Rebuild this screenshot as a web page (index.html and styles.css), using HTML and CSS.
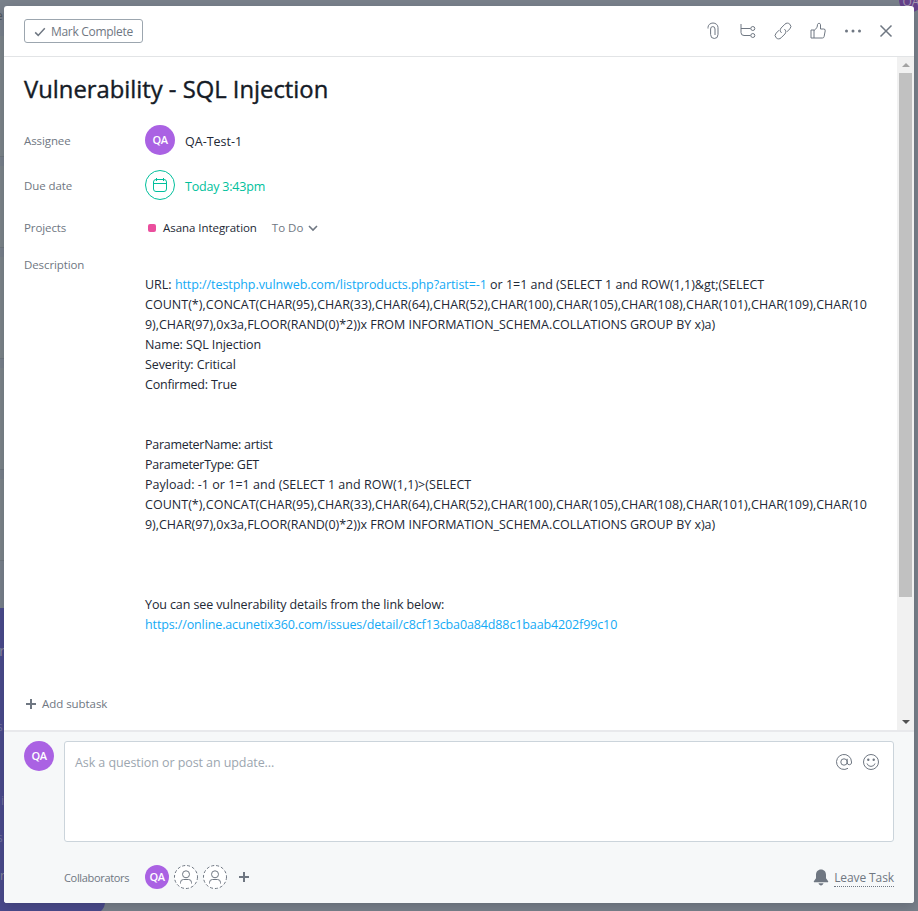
FILE: index.html
```
<!DOCTYPE html>
<html lang="en">
<head>
  <meta charset="UTF-8" />
  <title>Vulnerability - SQL Injection</title>
  <link rel="stylesheet" href="styles.css">
</head>
<body>
  <div class="backdrop">
    <div class="row-strip r1"></div>
    <div class="row-strip r2"></div>
    <div class="row-strip r3"></div>
    <div class="row-strip r4"></div>
    <div class="row-strip r5"></div>
    <div class="promo"></div>
    <span class="behind b1">e</span>
    <span class="behind b2">r</span>
    <span class="behind b3">s</span>
    <span class="behind b4">i</span>
    <span class="behind b5">s</span>
    <span class="behind b6">r</span>
    <div class="back-avatar">QA</div>
  </div>

  <div class="modal">
    <div class="toolbar">
      <button class="complete-btn">
        <svg width="12" height="12" viewBox="0 0 12 12"><path d="M1.2 6.4l3 3L10.800 2.300" /></svg>
        <span>Mark Complete</span>
      </button>
      <div class="tools">
        <svg class="tool" width="18" height="18" viewBox="0 0 18 18"><path d="M4 6.500V5.500a5 4.500 0 0 1 10 0v7a3.700 4 0 0 1-7.400 0V7a2 2.200 0 0 1 4.400 0v6" /></svg>
        <svg class="tool" width="18" height="18" viewBox="0 0 18 18"><path d="M2 2v8.500a3 3 0 0 0 3 3h6.500M2 6.500h9.500" /><circle cx="13.800" cy="6.500" r="2" /><circle cx="13.800" cy="13.500" r="2" /></svg>
        <svg class="tool" width="18" height="18" viewBox="0 0 18 18"><path d="M7.600 10.900a3.300 3.300 0 0 1-.5-4.900l3.800-3.800a3.300 3.300 0 0 1 4.900 0 3.300 3.300 0 0 1 0 4.700l-3 3" /><path d="M10.400 7.100a3.300 3.300 0 0 1 .5 4.900l-3.800 3.800a3.300 3.300 0 0 1-4.900 0 3.300 3.300 0 0 1 0-4.700l3-3" /></svg>
        <svg class="tool" width="18" height="18" viewBox="0 0 18 18"><path d="M2 8h3v8H2zM5 8.500L8 5.600l.6-3.300a1.500 1.500 0 0 1 2.900.4V7h3.100a1.600 1.600 0 0 1 1.600 1.900l-1.100 5.700a1.700 1.700 0 0 1-1.700 1.400H5" /></svg>
        <svg class="tool dots" width="18" height="18" viewBox="0 0 18 18"><circle cx="2.500" cy="9" r="1.500" /><circle cx="9" cy="9" r="1.500" /><circle cx="15.500" cy="9" r="1.500" /></svg>
        <svg class="tool close" width="18" height="18" viewBox="0 0 18 18"><path d="M3.500 3.500l11 11M14.500 3.500l-11 11" /></svg>
      </div>
    </div>

    <div class="content">
      <div class="task">
        <h1>Vulnerability - SQL Injection</h1>

        <div class="field assignee">
          <span class="label">Assignee</span>
          <span class="avatar">QA</span>
          <span class="value">QA-Test-1</span>
        </div>
        <div class="field due">
          <span class="label">Due date</span>
          <span class="date-icon">
            <svg width="16" height="16" viewBox="0 0 16 16"><rect x="1.500" y="2.500" width="13" height="12" rx="2.500" /><path d="M1.500 6.500h13M4.500 1v3M11.500 1v3" /></svg>
          </span>
          <span class="value date">Today 3:43pm</span>
        </div>
        <div class="field projects">
          <span class="label">Projects</span>
          <span class="dot"></span>
          <span class="project-name">Asana Integration</span>
          <span class="section">To Do</span>
          <svg class="chevron" width="10" height="7" viewBox="0 0 10 7"><path d="M1 1l4 4 4-4" /></svg>
        </div>
        <div class="field description">
          <span class="label">Description</span>
          <div class="text">
            <p>URL: <a class="target" href="#">http://testphp.vulnweb.com/listproducts.php?artist=-1</a> or 1=1 and (SELECT 1 and ROW(1,1)&amp;gt;(SELECT</p>
            <p class="chars">COUNT(*),CONCAT(CHAR(95),CHAR(33),CHAR(64),CHAR(52),CHAR(100),CHAR(105),CHAR(108),CHAR(101),CHAR(109),CHAR(10</p>
            <p class="query">9),CHAR(97),0x3a,FLOOR(RAND(0)*2))x FROM INFORMATION_SCHEMA.COLLATIONS GROUP BY x)a)</p>
            <p class="meta">Name: SQL Injection</p>
            <p class="meta">Severity: Critical</p>
            <p class="meta confirmed">Confirmed: True</p>
            <br><br>
            <p class="param">ParameterName: artist</p>
            <p class="param">ParameterType: GET</p>
            <p class="payload">Payload: -1 or 1=1 and (SELECT 1 and ROW(1,1)&gt;(SELECT</p>
            <p class="chars">COUNT(*),CONCAT(CHAR(95),CHAR(33),CHAR(64),CHAR(52),CHAR(100),CHAR(105),CHAR(108),CHAR(101),CHAR(109),CHAR(10</p>
            <p class="query">9),CHAR(97),0x3a,FLOOR(RAND(0)*2))x FROM INFORMATION_SCHEMA.COLLATIONS GROUP BY x)a)</p>
            <br><br><br>
            <p class="details">You can see vulnerability details from the link below:</p>
            <p><a class="issue" href="#">https://online.acunetix360.com/issues/detail/c8cf13cba0a84d88c1baab4202f99c10</a></p>
          </div>
        </div>

        <div class="add-subtask">
          <svg class="plus" width="12" height="12" viewBox="0 0 12 12"><path d="M6 1v10M1 6h10" /></svg>
          <span>Add subtask</span>
        </div>
      </div>
      <div class="scrollbar">
        <span class="arrow up"></span>
        <span class="thumb"></span>
        <span class="arrow down"></span>
      </div>
    </div>

    <div class="footer">
      <div class="composer">
        <span class="avatar">QA</span>
        <div class="comment-box">
          <span class="placeholder">Ask a question or post an update...</span>
          <svg class="tool" width="18" height="18" viewBox="0 0 18 18"><circle cx="9" cy="9" r="3.200" /><path d="M12.200 5.800V10a2.200 2.200 0 0 0 4.300 0V9A7.500 7.500 0 1 0 13 15.300" /></svg>
          <svg class="tool" width="18" height="18" viewBox="0 0 18 18"><circle cx="9" cy="9" r="7.500" /><path d="M5 10.500a4.200 4.200 0 0 0 8 0" /><circle class="eye" cx="6.300" cy="6.700" r="1.200" /><circle class="eye" cx="11.700" cy="6.700" r="1.200" /></svg>
        </div>
      </div>
      <div class="collaborators">
        <span class="collab-label">Collaborators</span>
        <span class="avatar small">QA</span>
        <svg class="ghost" width="24" height="24" viewBox="0 0 24 24"><circle class="ring" cx="12" cy="12" r="11.500" /><circle cx="12" cy="9.300" r="3.500" /><path d="M6.500 18.500v-1a3 3 0 0 1 3-3h5a3 3 0 0 1 3 3v1" /></svg>
        <svg class="ghost" width="24" height="24" viewBox="0 0 24 24"><circle class="ring" cx="12" cy="12" r="11.500" /><circle cx="12" cy="9.300" r="3.500" /><path d="M6.500 18.500v-1a3 3 0 0 1 3-3h5a3 3 0 0 1 3 3v1" /></svg>
        <svg class="plus" width="12" height="12" viewBox="0 0 12 12"><path d="M6 1v10M1 6h10" /></svg>
        <svg class="bell" width="16" height="17" viewBox="0 0 16 17"><path d="M8 .5c3.200 0 5 2.300 5 5.200v3.500l2 2.700c.5.700.2 1.300-.6 1.300H1.600C.8 13.200.5 12.600 1 11.900l2-2.700V5.700C3 2.800 4.800.5 8 .5zM5.500 14.300h5c-.5 1.400-1.300 2.100-2.500 2.100s-2-.7-2.500-2.100z" /></svg>
        <span class="leave">Leave Task</span>
      </div>
    </div>
  </div>
</body>
</html>
```
FILE: styles.css
```
* {
  box-sizing: border-box;
}

body {
  margin: 0;
  height: 911px;
  padding: 6px 4px 8px;
  overflow: hidden;
  background: #79818b;
  font-family: 'Segoe UI', 'Open Sans', sans-serif;
  font-size: 12.5px;
  line-height: 20px;
  color: #222835;
}

h1, p {
  margin: 0;
}

svg {
  flex: none;
  fill: none;
  stroke: #6f7782;
}

a {
  color: #14aaf5;
  text-decoration: none;
}

.backdrop {
  position: absolute;
  inset: 0;
  overflow: hidden;
  background: #79818b;
}

.row-strip {
  position: absolute;
  left: 0;
  width: 8px;
  background: #7d858a;
  border-bottom: 1px solid #70787f;
}

.r1 { top: 36px; height: 121px; }
.r2 { top: 166px; height: 82px; }
.r3 { top: 257px; height: 102px; }
.r4 { top: 368px; height: 102px; }
.r5 { top: 479px; height: 82px; }

.promo {
  position: absolute;
  left: 0;
  top: 608px;
  width: 105px;
  height: 306px;
  background: #4a4a8c;
  border-radius: 0 0 12px 0;
}

.behind {
  position: absolute;
  left: -3px;
  font-size: 12px;
  color: #73749f;
}

.b1 { top: 6px; left: -4px; color: #4f565f; }
.b2 { top: 640px; left: -1px; font-size: 15px; color: #8a8b9f; }
.b3 { top: 717px; }
.b4 { top: 791px; left: 1px; }
.b5 { top: 828px; }
.b6 { top: 866px; left: 0; color: #8a8b9f; }

.back-avatar {
  position: absolute;
  left: 899px;
  top: -12px;
  width: 24px;
  height: 24px;
  border-radius: 50%;
  background: #66418b;
  color: #a59ab2;
  font-size: 12px;
  line-height: 27px;
  text-align: center;
}

.modal {
  position: relative;
  display: flex;
  flex-direction: column;
  height: 897px;
  border-radius: 3px;
  background: #fff;
  overflow: hidden;
  box-shadow: 0 4px 12px rgba(21, 27, 38, 0.2);
}

.toolbar {
  display: flex;
  align-items: center;
  justify-content: space-between;
  flex: none;
  height: 51px;
  padding: 0 19px 0 20px;
  border-bottom: 1px solid #e2e4e6;
}

.complete-btn {
  display: flex;
  align-items: center;
  gap: 5px;
  width: 119px;
  height: 24px;
  padding: 2px 9px 0;
  border: 1px solid #9ca6af;
  border-radius: 3px;
  background: #fff;
  color: #6f7782;
  font: inherit;
  font-size: 12px;
  letter-spacing: -0.3px;
  white-space: nowrap;
}

.complete-btn svg {
  stroke-width: 1.5;
}

.tools {
  display: flex;
  gap: 17px;
}

.tools .close {
  margin-left: -2px;
  stroke-width: 1.5;
}

.dots {
  fill: #6f7782;
  stroke: none;
}

.content {
  display: flex;
  flex: none;
  height: 673px;
}

.task {
  flex: 1;
  min-width: 0;
  padding: 16px 0 0 20px;
}

h1 {
  height: 32px;
  font-size: 23.8px;
  line-height: 32px;
  font-weight: 400;
  color: #151b26;
  -webkit-text-stroke: 0.4px #151b26;
  white-space: nowrap;
}

.field {
  display: flex;
  align-items: center;
  white-space: nowrap;
}

.label {
  flex: none;
  width: 121px;
  color: #6f7782;
  font-size: 11.5px;
  letter-spacing: -0.1px;
}

.assignee {
  height: 30px;
  margin-top: 20px;
}

.due {
  height: 30px;
  margin-top: 15px;
}

.assignee .label,
.due .label {
  padding-top: 2px;
}

.projects {
  height: 20px;
  margin-top: 18px;
}

.description {
  align-items: flex-start;
  margin-top: 17px;
}

.avatar {
  flex: none;
  width: 30px;
  height: 30px;
  border-radius: 50%;
  background: #aa62e3;
  color: #fff;
  font-size: 11px;
  font-weight: 600;
  line-height: 30px;
  letter-spacing: -0.5px;
  text-align: center;
}

.avatar.small {
  width: 24px;
  height: 24px;
  line-height: 24px;
}

.value {
  margin: 4px 0 0 10px;
}

.date-icon {
  display: flex;
  align-items: center;
  justify-content: center;
  width: 30px;
  height: 30px;
  border: 1px solid #00bf9c;
  border-radius: 50%;
}

.date-icon svg {
  stroke: #00bf9c;
}

.date {
  color: #00bf9c;
  letter-spacing: -0.2px;
}

.dot {
  width: 8px;
  height: 8px;
  margin: 0 7px 0 3px;
  border-radius: 2px;
  background: #ea4e9d;
}

.project-name {
  font-size: 11.5px;
  letter-spacing: -0.05px;
}

.section {
  margin-left: 15px;
  font-size: 11.5px;
  color: #6f7782;
}

.chevron {
  margin-left: 5px;
  stroke-width: 1.6;
}

.text {
  padding-top: 20px;
  height: 400px;
}

.target { letter-spacing: -0.07px; }
.chars { letter-spacing: 0.03px; }
.query { letter-spacing: -0.03px; }
.meta { letter-spacing: -0.1px; }
.confirmed { letter-spacing: -0.22px; }
.param { letter-spacing: -0.28px; }
.payload { letter-spacing: 0.03px; }
.details { letter-spacing: -0.11px; }
.issue { letter-spacing: -0.12px; }

.add-subtask {
  display: flex;
  align-items: center;
  gap: 5px;
  margin: 39px 0 0 1px;
  font-size: 11.5px;
  letter-spacing: -0.05px;
  color: #6f7782;
}

.plus {
  stroke-width: 2;
}

.scrollbar {
  display: flex;
  flex-direction: column;
  align-items: center;
  width: 17px;
  background: #f1f1f1;
}

.thumb {
  width: 13px;
  height: 524px;
  background: #c1c1c1;
}

.arrow {
  border: 4px solid transparent;
}

.up {
  margin: 2px 0 6px;
  border-bottom-color: #a3a3a3;
}

.down {
  margin-top: auto;
  margin-bottom: 2px;
  border-top-color: #505050;
}

.footer {
  flex: 1;
  border-top: 2px solid #e8e9ec;
  background: #f6f8f9;
}

.composer {
  display: flex;
  gap: 10px;
  padding: 9px 20px 0;
}

.comment-box {
  display: flex;
  flex: 1;
  gap: 9px;
  height: 101px;
  padding: 11px 13px 0 10px;
  border: 1px solid #cbd4db;
  border-radius: 3px;
  background: #fff;
}

.placeholder {
  margin-right: auto;
  color: #9ca6af;
  letter-spacing: -0.08px;
}

.eye {
  fill: #6f7782;
  stroke: none;
}

.collaborators {
  display: flex;
  align-items: center;
  height: 24px;
  margin-top: 23px;
  padding: 0 20px 0 60px;
  color: #6f7782;
}

.collab-label {
  width: 81px;
  padding-top: 2px;
  font-size: 11px;
  letter-spacing: -0.33px;
}

.ghost {
  margin-left: 5px;
}

.ring {
  fill: #fff;
  stroke-dasharray: 3 2;
}

.collaborators .plus {
  margin-left: 11px;
}

.bell {
  margin: 0 5px 0 auto;
  fill: #6f7782;
  stroke: none;
}

.leave {
  height: 19px;
  font-size: 12px;
  line-height: 19px;
  letter-spacing: -0.1px;
  border-bottom: 1px dotted #6f7782;
}
```
